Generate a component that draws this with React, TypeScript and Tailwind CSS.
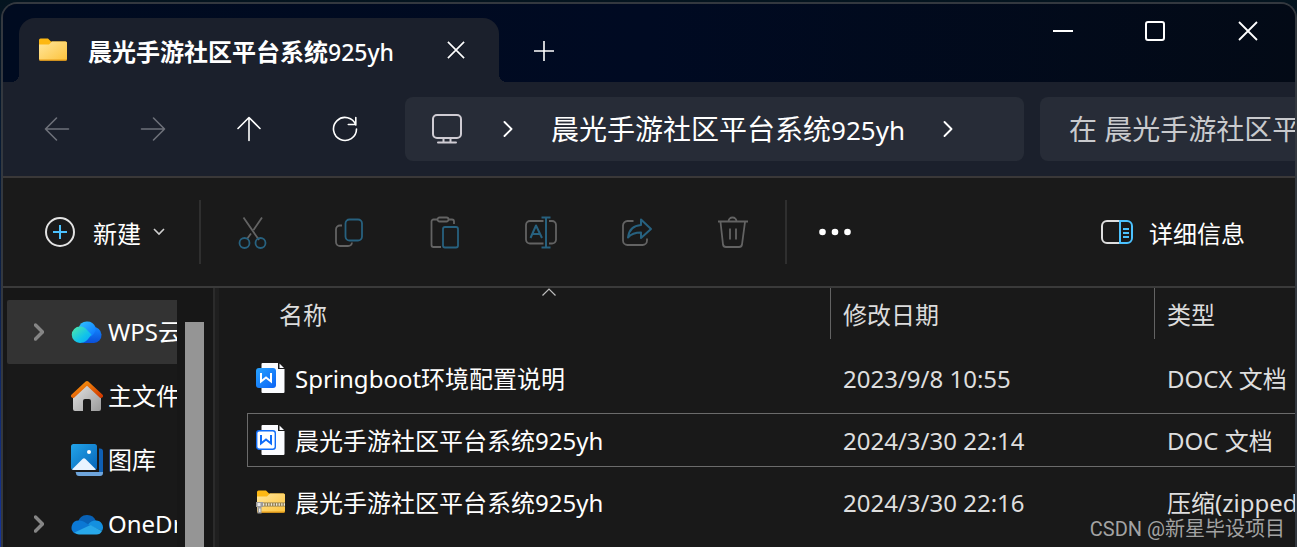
import React, { useState } from 'react';

const FOLDER = '晨光手游社区平台系统';
const SUFFIX = '925yh';

const CloseIcon = ({ size }: { size: number }) => (
  <svg width={size} height={size} viewBox="0 0 20 20" fill="none" stroke="currentColor" strokeWidth="1.8">
    <path d="M1 1 19 19M19 1 1 19" />
  </svg>
);

const ArrowIcon = ({ className }: { className?: string }) => (
  <svg className={className} width="26" height="26" viewBox="0 0 26 26" fill="none" stroke="currentColor" strokeWidth="1.6" strokeLinecap="round" strokeLinejoin="round">
    <path d="M24.5 13H1.5M12.5 2 1.5 13l11 11" />
  </svg>
);

const RefreshIcon = () => (
  <svg width="26" height="26" viewBox="0 0 26 26" fill="none" stroke="currentColor" strokeWidth="1.6" strokeLinecap="round" strokeLinejoin="round">
    <path d="M23.800 9A11.500 11.500 0 1 0 24.500 13M23.800 1.500V8.500h-7.500" />
  </svg>
);

const ChevronRight = ({ width = 1.9 }: { width?: number }) => (
  <svg width="10" height="18" viewBox="0 0 10 18" fill="none" stroke="currentColor" strokeWidth={width} strokeLinecap="round" strokeLinejoin="round">
    <path d="M1.500 2 8.500 9l-7 7" />
  </svg>
);

const MonitorIcon = () => (
  <svg width="32" height="32" viewBox="0 0 32 32" fill="none" stroke="#cfccd3" strokeWidth="2">
    <rect x="2" y="2" width="28" height="23" rx="4" />
    <path d="M12.500 25v4M19.500 25v4M7 29.500h18" strokeLinecap="round" />
  </svg>
);

const FolderIcon = ({ zip = false }: { zip?: boolean }) => (
  <svg width="30" height="26" viewBox="0 0 30 26">
    <defs>
      <linearGradient id="folderFront" x1="0" y1="0" x2="1" y2="1">
        <stop offset="0" stopColor="#ffe69c" />
        <stop offset="1" stopColor="#fdc33c" />
      </linearGradient>
    </defs>
    <path d="M1 3a1.500 1.500 0 0 1 1.500-1.500H10l3 3h14.500A1.500 1.500 0 0 1 29 6v6H1z" fill="#fdb813" />
    <path d="M1 7.500h10l3-3h13.500A1.500 1.500 0 0 1 29 6v16a1.500 1.500 0 0 1-1.500 1.500h-25A1.500 1.500 0 0 1 1 22z" fill="url(#folderFront)" />
    <path d="M1 22.500h28a1.500 1.500 0 0 1-1.500 1.200h-25A1.500 1.500 0 0 1 1 22.500z" fill="#e59a16" />
    {zip && (
      <g>
        <path d="M3 13.500h26v4H3z" fill="#8d7a4c" />
        <path d="M7 15.500h22" stroke="#f0ead8" strokeWidth="2.500" strokeDasharray="1.300 1.300" />
        <path d="M0 13h7v5h-1.500v6.500h-4V18H0z" fill="#9b9b9b" />
        <path d="M1.500 14h3v3h-3zM3 19.500h1.500v3.500H3z" fill="#e8e8e8" />
      </g>
    )}
  </svg>
);

const WordIcon = ({ filled }: { filled: boolean }) => (
  <svg width="30" height="32" viewBox="0 0 30 32">
    <defs>
      <linearGradient id="wordTile" x1="0" y1="0" x2="1" y2="1">
        <stop offset="0" stopColor="#27a3ff" />
        <stop offset="1" stopColor="#0b62f5" />
      </linearGradient>
    </defs>
    <path d="M6.500 1H22v6h6.500v23a1 1 0 0 1-1 1H6.500a1 1 0 0 1-1-1V2a1 1 0 0 1 1-1z" fill="#fbfcff" />
    <path d="M23.500 1.500 28 6h-4.500z" fill="#fbfcff" />
    {filled ? (
      <rect x="0" y="6" width="20" height="20" rx="3" fill="url(#wordTile)" />
    ) : (
      <rect x="0.700" y="6.700" width="18.600" height="18.600" rx="2.500" fill="#fff" stroke="#0f6cf8" strokeWidth="1.400" />
    )}
    <path d="M5 11v8.500l5-4 5 4V11" fill="none" stroke={filled ? '#fff' : '#0f6cf8'} strokeWidth="2" />
  </svg>
);

const WpsCloudIcon = () => (
  <svg width="32" height="24" viewBox="0 0 32 24">
    <defs>
      <linearGradient id="wpsLeft" x1="0" y1="0" x2="1" y2="1">
        <stop offset="0" stopColor="#52eba5" />
        <stop offset=".6" stopColor="#11c3ea" />
        <stop offset="1" stopColor="#0aa2fb" />
      </linearGradient>
      <linearGradient id="wpsTop" x1="0" y1="0" x2="1" y2="1">
        <stop offset="0" stopColor="#32c6ff" />
        <stop offset="1" stopColor="#0b72ff" />
      </linearGradient>
      <linearGradient id="wpsRight" x1="0" y1="0" x2="0" y2="1">
        <stop offset="0" stopColor="#1488ff" />
        <stop offset="1" stopColor="#0a4fd8" />
      </linearGradient>
    </defs>
    <path d="M22 7a8 8 0 1 1 1 16H11z" fill="url(#wpsRight)" />
    <path d="M7.500 8A9 9 0 0 1 24.500 7c1 4-2 7.500-4.500 9.500z" fill="url(#wpsTop)" />
    <path d="M9 6.500c4 0 6 2.300 8 4.500l3.500 3.500C17 19 15 23 9 23A8.200 8.200 0 0 1 9 6.500z" fill="url(#wpsLeft)" />
  </svg>
);

const HomeIcon = () => (
  <svg width="32" height="32" viewBox="0 0 32 32">
    <defs>
      <linearGradient id="homeWall" x1="0" y1="0" x2="1" y2="1">
        <stop offset="0" stopColor="#e6e6e6" />
        <stop offset="1" stopColor="#9a9a9a" />
      </linearGradient>
      <linearGradient id="homeRoof" x1="0" y1="0" x2="1" y2="1">
        <stop offset="0" stopColor="#fa9a10" />
        <stop offset="1" stopColor="#d23b00" />
      </linearGradient>
    </defs>
    <path d="M2 15 16 3l14 12v14a2 2 0 0 1-2 2h-8V21a2 2 0 0 0-2-2h-4a2 2 0 0 0-2 2v10H4a2 2 0 0 1-2-2z" fill="url(#homeWall)" />
    <path d="M2 16 16 3l14 13" fill="none" stroke="url(#homeRoof)" strokeWidth="4" strokeLinecap="round" strokeLinejoin="round" />
  </svg>
);

const GalleryIcon = () => (
  <svg width="32" height="32" viewBox="0 0 32 32">
    <defs>
      <linearGradient id="galleryFront" x1="0" y1="0" x2="1" y2="1">
        <stop offset="0" stopColor="#22a4ea" />
        <stop offset="1" stopColor="#0765b8" />
      </linearGradient>
    </defs>
    <path d="M28 4.500h1a3 3 0 0 1 3 3V28h-4z" fill="#0f5fb3" />
    <path d="M4.500 28H32v1a3 3 0 0 1-3 3H8a3 3 0 0 1-3-3z" fill="#6ea5dc" />
    <rect width="26" height="26" rx="2.500" fill="url(#galleryFront)" />
    <circle cx="18" cy="8" r="2" fill="#fff" />
    <path d="M1 25.500 11.500 15a2.200 2.200 0 0 1 3 0L25 25.500a3 3 0 0 1-1.500.500h-21a3 3 0 0 1-1.500-.500z" fill="#e9f4ff" />
  </svg>
);

const OneDriveIcon = () => (
  <svg width="32" height="22" viewBox="0 0 32 22">
    <path d="M7 9A9.500 9.500 0 0 1 25 8L17 14z" fill="#0861b5" />
    <path d="M8 7.500c3 0 5 1 7 2.500l8 5L4 20.500A7 7 0 0 1 8 7.500z" fill="#0b78d4" />
    <path d="M24.500 7.500A7 7 0 0 1 31 18L17 11.500c2-2.500 4.500-4 7.500-4z" fill="#1490df" />
    <path d="M3.500 19.500 19.500 12l11.500 6a6.300 6.300 0 0 1-6 3.500H8a7 7 0 0 1-4.500-2z" fill="#28a8ea" />
  </svg>
);

const GREY = '#636363';
const BLUE = '#27617f';

const tools = [
  {
    label: '剪切',
    art: (
      <>
        <path d="M6.500 1.500 22 24M25 1.500 16.500 14M14 17.500 10 23" stroke={GREY} />
        <circle cx="7.500" cy="27" r="5" stroke={BLUE} />
        <circle cx="23.500" cy="27" r="5" stroke={BLUE} />
      </>
    ),
  },
  {
    label: '复制',
    art: (
      <>
        <path d="M9 9.500H7a4 4 0 0 0-4 4V26a4 4 0 0 0 4 4h8a4 4 0 0 0 4-3.500" stroke={GREY} />
        <rect x="12.500" y="3.500" width="16.500" height="21" rx="4" stroke={BLUE} />
      </>
    ),
  },
  {
    label: '粘贴',
    art: (
      <>
        <path d="M8.500 3.500H4.500a2 2 0 0 0-2 2V29a2 2 0 0 0 2 2H12M19.500 3.500H23a2 2 0 0 1 2 2V8" stroke={GREY} />
        <rect x="8.500" y="1.500" width="11" height="4" rx="2" stroke={GREY} />
        <rect x="14" y="11" width="15" height="20.500" rx="2" stroke={BLUE} />
      </>
    ),
  },
  {
    label: '重命名',
    art: (
      <>
        <path d="M18.500 5H5a4 4 0 0 0-4 4v14.500a4 4 0 0 0 4 4h13.500M24 5h3a4 4 0 0 1 4 4v14.500a4 4 0 0 1-4 4h-3" stroke={GREY} />
        <path d="M5.500 22 11 9.500 17 22M7.500 18h7.500M21 1.500v30M16.500 1.500h9M16.500 31.500h9" stroke={BLUE} strokeWidth="2" />
      </>
    ),
  },
  {
    label: '共享',
    art: (
      <>
        <path d="M12.500 5H6.500A4.500 4.500 0 0 0 2 9.500v15A4.500 4.500 0 0 0 6.500 29h15a4.500 4.500 0 0 0 4.500-4.500v-2" stroke={GREY} />
        <path d="M20 3.500 30 13l-10 9v-5.500c-6 0-9.500 1-13 5C8 13.500 12.500 9.500 20 9z" stroke={BLUE} strokeWidth="2" />
      </>
    ),
  },
  {
    label: '删除',
    art: (
      <>
        <path d="M1 5.500h30M3.500 6 6 28.500a3 3 0 0 0 3 2.500h13a3 3 0 0 0 3-2.500L28 6M11.500 5.500a4 4 0 0 1 8 0M13 12.500v11M19 12.500v11" stroke={GREY} />
      </>
    ),
  },
];

const places = [
  { label: 'WPS云盘', icon: <WpsCloudIcon />, expandable: true },
  { label: '主文件夹', icon: <HomeIcon />, expandable: false },
  { label: '图库', icon: <GalleryIcon />, expandable: false },
  { label: 'OneDrive', icon: <OneDriveIcon />, expandable: true },
];

const files = [
  { name: 'Springboot环境配置说明', date: '2023/9/8 10:55', type: 'DOCX 文档', icon: <WordIcon filled /> },
  { name: FOLDER + SUFFIX, date: '2024/3/30 22:14', type: 'DOC 文档', icon: <WordIcon filled={false} /> },
  { name: FOLDER + SUFFIX, date: '2024/3/30 22:16', type: '压缩(zipped)文件夹', icon: <FolderIcon zip /> },
];

const TitleBar = () => (
  <header className="flex h-[78px] bg-linear-to-r from-[#000b20] via-[#000a22] to-[#030a16]">
    {/* active tab, with the two small curves that join it to the toolbar */}
    <div className="relative ml-4 mt-3.5 flex w-[480px] items-center rounded-t-2xl bg-[#1b202c] pl-[19px] pr-[34px]">
      <span className="absolute bottom-0 -left-2 size-2 bg-[radial-gradient(circle_at_0_0,transparent_8px,#1b202c_8px)]" />
      <span className="absolute bottom-0 -right-2 size-2 bg-[radial-gradient(circle_at_100%_0,transparent_8px,#1b202c_8px)]" />
      <FolderIcon />
      <h1 className="ml-5 flex-1 whitespace-nowrap pt-1 text-[24px] leading-8 font-bold">
        {FOLDER}
        <span className="text-[23px] font-medium">{SUFFIX}</span>
      </h1>
      <button aria-label="关闭标签页"><CloseIcon size={18} /></button>
    </div>
    <button aria-label="新建标签页" className="mt-4 flex w-[90px] items-center justify-center">
      <svg width="20" height="20" viewBox="0 0 20 20" stroke="currentColor" strokeWidth="1.600">
        <path d="M10 0v20M0 10h20" />
      </svg>
    </button>
    <div className="ml-auto flex h-[54px]">
      <button aria-label="最小化" className="flex w-[92px] items-center justify-center">
        <svg width="20" height="20" viewBox="0 0 20 20" stroke="currentColor" strokeWidth="2"><path d="M0 10h20" /></svg>
      </button>
      <button aria-label="最大化" className="flex w-[92px] items-center justify-center">
        <svg width="20" height="20" viewBox="0 0 20 20" fill="none" stroke="currentColor" strokeWidth="2"><rect x="1" y="1" width="18" height="18" rx="2" /></svg>
      </button>
      <button aria-label="关闭" className="flex w-[94px] items-center justify-center"><CloseIcon size={20} /></button>
    </div>
  </header>
);

const NavBar = () => {
  const [query, setQuery] = useState('');

  return (
    <nav className="flex h-24 items-center border-b-2 border-[#3a3838] bg-[#1b202c] pl-1.5">
      <button aria-label="后退" disabled className="flex h-16 w-24 items-center justify-center text-[#6d7079]"><ArrowIcon /></button>
      <button aria-label="前进" disabled className="flex h-16 w-24 items-center justify-center text-[#6d7079]"><ArrowIcon className="rotate-180" /></button>
      <button aria-label="向上" className="flex h-16 w-24 items-center justify-center"><ArrowIcon className="rotate-90" /></button>
      <button aria-label="刷新" className="flex h-16 w-24 items-center justify-center"><RefreshIcon /></button>
      <div className="ml-3 flex h-16 min-w-0 flex-1 items-center rounded-lg bg-[#272c37] pl-[26px]">
        <MonitorIcon />
        <span className="ml-10"><ChevronRight /></span>
        <a href="#" className="ml-[38px] whitespace-nowrap text-[28px] leading-10">
          {FOLDER}
          <span className="text-[26px]">{SUFFIX}</span>
        </a>
        <span className="ml-[38px]"><ChevronRight /></span>
      </div>
      <input
        type="text"
        aria-label="搜索"
        value={query}
        onChange={(e) => setQuery(e.target.value)}
        placeholder={`在 ${FOLDER}${SUFFIX} 中搜索`}
        className="ml-4 h-16 w-[255px] rounded-l-lg bg-[#272c37] pl-[29px] text-[28px] outline-none placeholder:text-[#c9cacd]"
      />
    </nav>
  );
};

const CommandBar = () => (
  <div className="flex h-[110px] items-center border-b-2 border-[#3a3a3a] bg-[#1a1a1a]">
    <button className="flex h-16 w-[196px] items-center pl-[42px]">
      <svg width="30" height="30" viewBox="0 0 30 30" fill="none">
        <circle cx="15" cy="15" r="14" stroke="#e2e2e2" strokeWidth="2" />
        <path d="M15 8v14M8 15h14" stroke="#4cc2ff" strokeWidth="2" />
      </svg>
      <span className="ml-[18px] pt-1 text-[24px] leading-8">新建</span>
      <svg className="ml-3" width="12" height="8" viewBox="0 0 12 8" fill="none" stroke="#cfcfcf" strokeWidth="1.600">
        <path d="m1 1 5 5 5-5" />
      </svg>
    </button>
    <div className="h-16 w-0.5 bg-[#2f2f2f]" />
    <div className="mx-1 flex">
      {tools.map((tool) => (
        <button key={tool.label} aria-label={tool.label} disabled className="flex h-16 w-24 items-center justify-center">
          <svg width="32" height="33" viewBox="0 0 32 33" fill="none" strokeWidth="1.800" strokeLinejoin="round">
            {tool.art}
          </svg>
        </button>
      ))}
    </div>
    <div className="h-16 w-0.5 bg-[#2f2f2f]" />
    <button aria-label="查看更多" className="flex h-16 w-24 items-center justify-center">
      <svg width="32" height="8" viewBox="0 0 32 8" fill="currentColor">
        <circle cx="3.500" cy="4" r="3.300" />
        <circle cx="16" cy="4" r="3.300" />
        <circle cx="28.500" cy="4" r="3.300" />
      </svg>
    </button>
    <button className="mr-[50px] ml-auto flex h-16 items-center gap-4">
      <svg width="32" height="24" viewBox="0 0 32 24" fill="none" strokeWidth="2">
        <path d="M19 1H6a5 5 0 0 0-5 5v12a5 5 0 0 0 5 5h13" stroke="#dedede" />
        <path d="M19 1h7a5 5 0 0 1 5 5v12a5 5 0 0 1-5 5h-7zM22 9h6M22 13h6M22 17h6" stroke="#4cc2ff" />
      </svg>
      <span className="pt-1 text-[24px] leading-8">详细信息</span>
    </button>
  </div>
);

const Sidebar = () => (
  <aside className="flex w-[210px] shrink-0 overflow-hidden bg-[#171717] pl-1">
    <ul className="mt-3 w-[170px] bg-[#191919]">
      {places.map((place, i) => (
        <li key={place.label}>
          <a
            href="#"
            className={`flex h-16 items-center overflow-hidden rounded-l-xs whitespace-nowrap text-[24px] leading-8 ${i === 0 ? 'bg-[#333333]' : ''}`}
          >
            <span className="flex w-16 shrink-0 justify-center text-[#858585]">
              {place.expandable && <ChevronRight width={3.5} />}
            </span>
            <span className="mr-[5px] shrink-0">{place.icon}</span>
            {place.label}
          </a>
        </li>
      ))}
    </ul>
    <div className="mt-[34px] ml-2 w-[19px] bg-[#959595]" />
  </aside>
);

const FileTable = () => (
  <main className="min-w-0 flex-1 overflow-hidden bg-[#191919] pl-7">
    <table className="-mt-2 w-full table-fixed border-separate border-spacing-x-0 border-spacing-y-2 text-left text-[24px] leading-8 whitespace-nowrap">
      <colgroup>
        <col />
        <col className="w-[324px]" />
        <col className="w-[141px]" />
      </colgroup>
      <thead className="text-[#dcdcdc]">
        <tr>
          <th className="h-[55px] p-0 align-top font-normal">
            <div className="relative ml-5 flex h-[51px] items-center pt-0.5 pl-3">
              名称
              <svg className="absolute top-0 left-1/2 -translate-x-1/2" width="14" height="8" viewBox="0 0 14 8" fill="none" stroke="#bdbdbd" strokeWidth="1.200">
                <path d="m.5 7.500 6.500-6.500 6.500 6.500" />
              </svg>
            </div>
          </th>
          <th className="h-[55px] p-0 align-top font-normal">
            <div className="flex h-[51px] items-center border-l border-[#636363] pt-0.5 pl-3">修改日期</div>
          </th>
          <th className="h-[55px] p-0 align-top font-normal">
            <div className="flex h-[51px] items-center border-l border-[#636363] pt-0.5 pl-3">类型</div>
          </th>
        </tr>
      </thead>
      <tbody>
        {files.map((file, i) => {
          const line = i === 1 ? 'border-[#6b6b6b]' : 'border-transparent';
          return (
            <tr key={file.date}>
              <td className={`h-[54px] border-y border-l p-0 pl-2 ${line}`}>
                <div className="flex items-center gap-[9px]">
                  {file.icon}
                  <span className="pt-0.5">{file.name}</span>
                </div>
              </td>
              <td className={`border-y p-0 pt-0.5 pl-[13px] text-[#dedede] ${line}`}>{file.date}</td>
              <td className={`overflow-hidden border-y p-0 pt-0.5 pl-[13px] text-[#dedede] ${line}`}>{file.type}</td>
            </tr>
          );
        })}
      </tbody>
    </table>
  </main>
);

const App: React.FC = () => {
  return (
    <div className="h-screen overflow-hidden bg-linear-to-b from-[#04141f] via-[#0c1f45] to-[#16349c] pt-0.5 pl-px font-['Noto_Sans','Noto_Sans_CJK_SC',sans-serif] text-white">
      <div className="relative flex h-full flex-col overflow-hidden rounded-t-2xl border-2 border-b-0 border-[#33383f] bg-[#191919]">
        <TitleBar />
        <NavBar />
        <CommandBar />
        <div className="flex min-h-0 flex-1">
          <Sidebar />
          <div className="w-1.5 shrink-0 border-l-2 border-[#2b2b2b] bg-[#1f1f1f]" />
          <FileTable />
        </div>
        <p className="absolute right-2.5 bottom-1 font-['Roboto','Noto_Sans_CJK_SC',sans-serif] text-[20px] leading-7 text-[#a3a3a3]">
          CSDN @新星毕设项目
        </p>
      </div>
    </div>
  );
};

export default App;
